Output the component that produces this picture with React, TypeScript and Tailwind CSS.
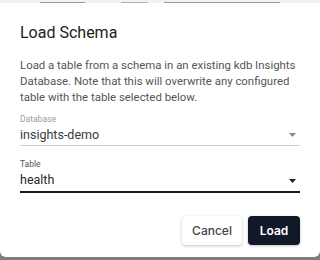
const Caret = ({ dark }: { dark?: boolean }) => (
  <svg width="7" height="4" viewBox="0 0 7 4" className="mr-[4px]">
    <path d="M0 0 L7 0 L3.5 4 Z" fill={dark ? "#222" : "#8a8a8a"} />
  </svg>
);

export default function App() {
  return (
    <div className="w-[320px] h-[260px] bg-[#7d7d7d] flex flex-col overflow-hidden font-['Roboto',sans-serif]">
      {/* bit of the page behind the dialog */}
      <div className="h-[3px] bg-[#f2f2f2] flex items-end gap-[6px] px-[40px] shrink-0">
        <div className="h-[1px] w-[50px] bg-[#9a9a9a]" />
        <div className="h-[1px] w-[30px] bg-[#b0b0b0] ml-[30px]" />
        <div className="h-[1px] w-[130px] bg-[#9a9a9a] ml-[10px]" />
      </div>

      <div className="bg-white rounded-b-[6px] h-[254px] shrink-0 px-[20px] pt-[20px] flex flex-col">
        <h2 className="text-[16px] leading-[20px] text-[#222]">Load Schema</h2>

        <p className="mt-[14px] text-[11.4px] leading-[16px] text-[#555]">
          Load a table from a schema in an existing kdb Insights Database. Note that this will overwrite any configured
          table with the table selected below.
        </p>

        <div className="mt-[8px]">
          <div className="text-[8.5px] leading-[12px] text-[#9a9a9a]">Database</div>
          <div className="flex items-center justify-between border-b border-[#cfcfcf] h-[21px]">
            <span className="text-[12.5px] text-[#3a3a3a]">insights-demo</span>
            <Caret />
          </div>
        </div>

        <div className="mt-[12px]">
          <div className="text-[8.5px] leading-[12px] text-[#555]">Table</div>
          <div className="flex items-center justify-between border-b-2 border-[#1a1a1a] h-[23px]">
            <span className="text-[12.5px] text-[#2a2a2a]">health</span>
            <Caret dark />
          </div>
        </div>

        <div className="flex justify-end gap-[6px] mt-[23px]">
          <button className="h-[29px] w-[60px] rounded-[4px] bg-white text-[12px] font-medium text-[#444] shadow-[0_1px_3px_rgba(0,0,0,0.25)] font-['Inter',sans-serif]">
            Cancel
          </button>
          <button className="h-[29px] w-[52px] rounded-[4px] bg-[#111827] text-[12px] font-semibold text-white shadow-[0_1px_3px_rgba(0,0,0,0.25)] font-['Inter',sans-serif]">
            Load
          </button>
        </div>
      </div>
    </div>
  );
}
